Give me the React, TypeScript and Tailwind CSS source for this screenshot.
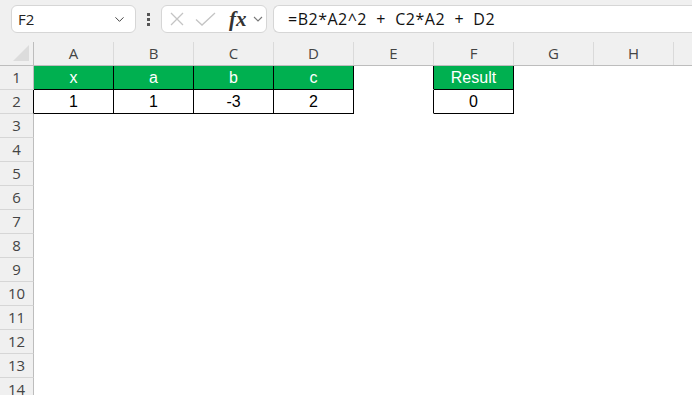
import { ChevronDown } from 'lucide-react';

const COLS = ['A', 'B', 'C', 'D', 'E', 'F', 'G', 'H', ''];
const ROWS = Array.from({ length: 14 }, (_, i) => i + 1);

type Cell = { text?: string; green?: boolean; r?: boolean; b?: boolean };

const DATA: Record<number, Cell[]> = {
  1: [
    { text: 'x', green: true, r: true, b: true },
    { text: 'a', green: true, r: true, b: true },
    { text: 'b', green: true, r: true, b: true },
    { text: 'c', green: true, r: true, b: true },
    { r: true },
    { text: 'Result', green: true, r: true, b: true },
  ],
  2: [
    { text: '1', r: true, b: true },
    { text: '1', r: true, b: true },
    { text: '-3', r: true, b: true },
    { text: '2', r: true, b: true },
    { r: true },
    { text: '0', r: true, b: true },
  ],
};

function FormulaBar() {
  return (
    <div className="flex h-[42px] items-start bg-[#f0f0f0] pt-[5px] font-['Open_Sans',sans-serif]">
      <div className="ml-[11px] flex h-[28px] w-[125px] items-center justify-between rounded-[6px] border border-[#d6d6d6] bg-white pl-[6px] pr-[8px]">
        <span className="text-[15px] text-[#222]">F2</span>
        <ChevronDown size={15} strokeWidth={1.6} className="text-[#444]" />
      </div>
      <div className="mx-[11px] flex h-[28px] flex-col items-center justify-center gap-[2px]">
        <span className="h-[3px] w-[3px] bg-[#555]" />
        <span className="h-[3px] w-[3px] bg-[#555]" />
        <span className="h-[3px] w-[3px] bg-[#555]" />
      </div>
      <div className="flex h-[28px] w-[106px] items-center rounded-[6px] border border-[#d6d6d6] bg-white">
        <svg width="16" height="16" viewBox="0 0 16 16" className="ml-[7px]">
          <path d="M2 2 L14 14 M14 2 L2 14" stroke="#c4c4c4" strokeWidth="1.3" fill="none" />
        </svg>
        <svg width="22" height="16" viewBox="0 0 22 16" className="ml-[10px]">
          <path d="M1 8.5 L7 14 L20 2" stroke="#c4c4c4" strokeWidth="1.3" fill="none" />
        </svg>
        <span className="ml-[12px] font-['Liberation_Serif',serif] text-[21px] font-bold italic leading-none text-[#333]">
          fx
        </span>
        <svg width="10" height="8" viewBox="0 0 10 8" className="ml-[6px]">
          <path d="M1 2 L5 6 L9 2" stroke="#777" strokeWidth="1.1" fill="none" />
        </svg>
      </div>
      <div className="ml-[6px] flex h-[28px] flex-1 items-center rounded-l-[6px] border border-r-0 border-[#d6d6d6] bg-white pl-[14px]">
        <span className="whitespace-pre font-['Open_Sans',sans-serif] text-[16px] tracking-[0.5px] text-[#111]">
          =B2*A2^2  +  C2*A2  +  D2
        </span>
      </div>
    </div>
  );
}

export default function App() {
  return (
    <div className="h-[395px] w-[692px] overflow-hidden bg-white">
      <FormulaBar />
      <div className="flex h-[24px] border-b border-[#bdbdbd] bg-[#f0f0f0] font-['Open_Sans',sans-serif] text-[15px] text-[#444]">
        <div className="relative w-[34px] shrink-0 border-r border-[#bdbdbd]">
          <svg width="18" height="18" viewBox="0 0 18 18" className="absolute bottom-[3px] right-[3px]">
            <path d="M17 1 L17 17 L1 17 Z" fill="#dcdcdc" />
          </svg>
        </div>
        {COLS.map((c, i) => (
          <div
            key={i}
            className="flex w-[80px] shrink-0 items-center justify-center border-r border-[#dadada]"
          >
            {c}
          </div>
        ))}
      </div>
      {ROWS.map((r) => {
        const cells = DATA[r] ?? [];
        return (
          <div key={r} className="flex h-[24px]">
            <div
              className={`flex w-[34px] shrink-0 items-center justify-center border-b border-r border-b-[#d6d6d6] bg-[#f0f0f0] font-['Open_Sans',sans-serif] text-[15px] text-[#444] ${
                r === 2 ? 'border-r-black' : 'border-r-[#bdbdbd]'
              }`}
            >
              {r}
            </div>
            {COLS.map((_, i) => {
              const cell = cells[i] ?? {};
              return (
                <div
                  key={i}
                  className={`flex w-[80px] shrink-0 items-center justify-center border-r border-b font-['Liberation_Sans',sans-serif] text-[16px] ${
                    cell.r ? 'border-r-black' : 'border-r-transparent'
                  } ${cell.b ? 'border-b-black' : 'border-b-transparent'} ${
                    cell.green ? 'bg-[#00b050] text-white' : 'text-black'
                  }`}
                >
                  {cell.text}
                </div>
              );
            })}
          </div>
        );
      })}
    </div>
  );
}
